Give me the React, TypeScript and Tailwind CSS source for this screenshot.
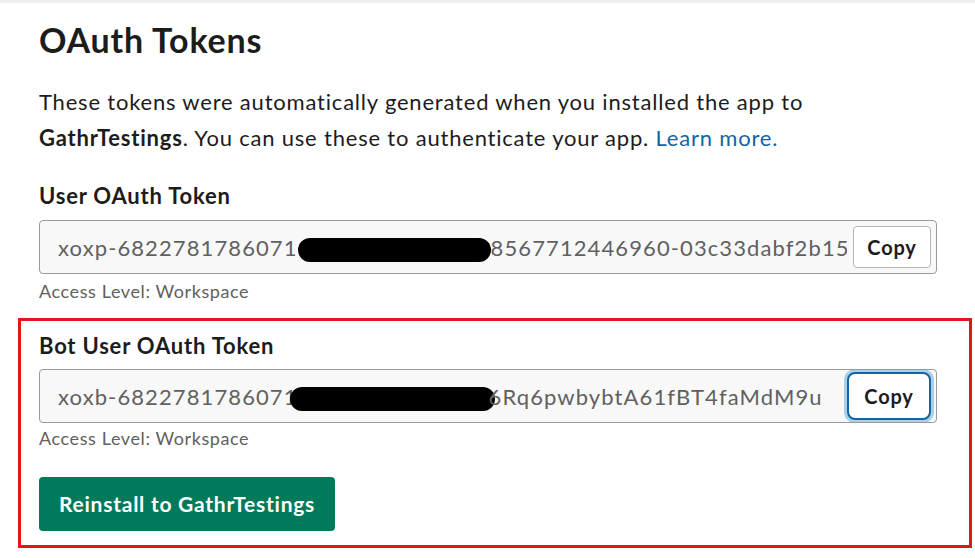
import React from "react";

function Redaction({ className }: { className: string }) {
  return <span className={`inline-block h-[24px] rounded-full bg-black align-middle ${className}`} />;
}

function TokenField({
  before,
  after,
  blob,
  focused,
}: {
  before: string;
  after: string;
  blob: string;
  focused?: boolean;
}) {
  return (
    <div className="flex h-[54px] items-center overflow-hidden rounded-[4px] border border-[#9a9a9a] bg-[#f8f8f8] pl-[18px] pr-[5px]">
      <div className="min-w-0 flex-1 overflow-hidden whitespace-nowrap text-[22px] tracking-[1.1px] text-[#616061]">
        {before}
        <Redaction className={blob} />
        {after}
      </div>
      <button
        type="button"
        className={
          focused
            ? "ml-[6px] h-[48px] w-[84px] shrink-0 rounded-[8px] border-[2px] border-[#1264a3] bg-white text-[20px] font-bold tracking-[0.8px] text-[#1d1c1d] shadow-[0_0_0_3px_#a9d0e6]"
            : "ml-[6px] h-[42px] w-[78px] shrink-0 rounded-[4px] border border-[#b5b5b5] bg-white text-[20px] font-bold tracking-[0.8px] text-[#1d1c1d]"
        }
      >
        Copy
      </button>
    </div>
  );
}

export default function App() {
  return (
    <div className="h-[558px] w-[975px] overflow-hidden border-t-[3px] border-[#eeeeee] bg-white font-['Lato','Noto_Sans',sans-serif] text-[#1d1c1d]">
      <div className="px-[39px] pt-[13px]">
        <h1 className="text-[34px] font-bold leading-[48px] tracking-[0.8px]">OAuth Tokens</h1>
        <p className="mt-[20px] text-[22px] leading-[36px] tracking-[0.8px]">
          These tokens were automatically generated when you installed the app to{" "}
          <b>GathrTestings</b>. You can use these to authenticate your app.{" "}
          <span className="text-[#1264a3]">Learn more.</span>
        </p>

        <h2 className="mt-[25px] text-[22px] font-bold leading-[30px] tracking-[0.8px]">User OAuth Token</h2>
        <div className="mt-[9px] w-[898px]">
          <TokenField
            before="xoxp-6822781786071"
            blob="w-[193px]"
            after="8567712446960-03c33dabf2b15a8c91e07d"
          />
        </div>
        <p className="mt-[5px] text-[18px] leading-[24px] tracking-[0.6px] text-[#616061]">Access Level: Workspace</p>

        <div className="-ml-[21px] mt-[15px] w-[954px] border-[3px] border-[#e3141c] pb-[14px] pl-[18px] pr-[32px] pt-[10px]">
          <h2 className="text-[22px] font-bold leading-[30px] tracking-[0.8px]">Bot User OAuth Token</h2>
          <div className="mt-[8px]">
            <TokenField
              before="xoxb-6822781786071"
              blob="-ml-[8px] -mr-[6px] w-[205px]"
              after="6Rq6pwbybtA61fBT4faMdM9u"
              focused
            />
          </div>
          <p className="mt-[3px] text-[18px] leading-[24px] tracking-[0.6px] text-[#616061]">Access Level: Workspace</p>
          <button
            type="button"
            className="mt-[27px] h-[54px] rounded-[4px] bg-[#007a5a] px-[20px] text-[21px] font-bold tracking-[0.75px] text-white"
          >
            Reinstall to GathrTestings
          </button>
        </div>
      </div>
    </div>
  );
}
